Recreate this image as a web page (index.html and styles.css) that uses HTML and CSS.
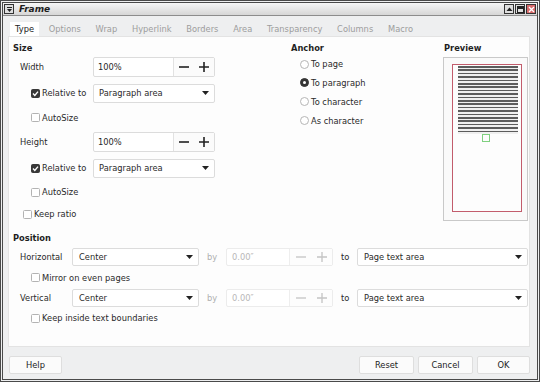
FILE: index.html
```html
<!DOCTYPE html>
<html>
<head>
<meta charset="utf-8">
<title>Frame</title>
<link rel="stylesheet" href="styles.css">
</head>
<body>
<div class="window">
  <div class="titlebar">
    <span class="wbtn menu"><svg width="7" height="7" viewBox="0 0 7 7"><rect x="1" y="1" width="5" height="1" fill="#222"/><polygon points="1,3 6,3 3.5,6" fill="#222"/></svg></span>
    <span class="title">Frame</span>
    <span class="wbtns">
      <span class="wbtn"><svg width="7" height="7" viewBox="0 0 7 7"><polygon points="0.5,5 6.5,5 3.5,1.5" fill="#222"/></svg></span>
      <span class="wbtn"><svg width="7" height="7" viewBox="0 0 7 7"><rect x="0.5" y="0.5" width="6" height="6" fill="none" stroke="#222"/><rect x="0.5" y="0.5" width="6" height="2.5" fill="#222"/></svg></span>
      <span class="wbtn close"><svg width="7" height="7" viewBox="0 0 7 7"><path d="M1 1 L6 6 M6 1 L1 6" stroke="#fff" stroke-width="1.3"/></svg></span>
    </span>
  </div>
  <div class="main">
    <div class="tabs">
      <span class="tab active">Type</span>
      <span class="tab">Options</span>
      <span class="tab">Wrap</span>
      <span class="tab">Hyperlink</span>
      <span class="tab">Borders</span>
      <span class="tab">Area</span>
      <span class="tab">Transparency</span>
      <span class="tab">Columns</span>
      <span class="tab">Macro</span>
    </div>
    <div class="panel">
      <div class="top">
        <div class="col-size">
          <div class="heading">Size</div>
          <div class="row r26 ind7">
            <span class="lbl w73">Width</span>
            <div class="spin">
              <span class="spin-input">100%</span>
              <span class="spin-btns">
                <span class="sb"><svg width="10" height="10" viewBox="0 0 10 10"><path d="M0 5 H10" stroke="#222" stroke-width="1.6"/></svg></span>
                <span class="sb"><svg width="10" height="10" viewBox="0 0 10 10"><path d="M0 5 H10 M5 0 V10" stroke="#222" stroke-width="1.6"/></svg></span>
              </span>
            </div>
          </div>
          <div class="row r26 ind18">
            <span class="cbw w62"><span class="cb checked"><svg width="7" height="7" viewBox="0 0 7 7"><path d="M1 3.6 L2.8 5.4 L6 1.6" stroke="#fff" stroke-width="1.4" fill="none"/></svg></span>Relative to</span>
            <div class="dropdown"><span>Paragraph area</span><svg width="7" height="4" viewBox="0 0 7 4"><polygon points="0,0 7,0 3.5,4" fill="#222"/></svg></div>
          </div>
          <div class="row r23 ind18"><span class="cbw"><span class="cb"></span>AutoSize</span></div>
          <div class="row r26 ind7">
            <span class="lbl w73">Height</span>
            <div class="spin">
              <span class="spin-input">100%</span>
              <span class="spin-btns">
                <span class="sb"><svg width="10" height="10" viewBox="0 0 10 10"><path d="M0 5 H10" stroke="#222" stroke-width="1.6"/></svg></span>
                <span class="sb"><svg width="10" height="10" viewBox="0 0 10 10"><path d="M0 5 H10 M5 0 V10" stroke="#222" stroke-width="1.6"/></svg></span>
              </span>
            </div>
          </div>
          <div class="row r26 ind18">
            <span class="cbw w62"><span class="cb checked"><svg width="7" height="7" viewBox="0 0 7 7"><path d="M1 3.6 L2.8 5.4 L6 1.6" stroke="#fff" stroke-width="1.4" fill="none"/></svg></span>Relative to</span>
            <div class="dropdown"><span>Paragraph area</span><svg width="7" height="4" viewBox="0 0 7 4"><polygon points="0,0 7,0 3.5,4" fill="#222"/></svg></div>
          </div>
          <div class="row r22 ind18"><span class="cbw"><span class="cb"></span>AutoSize</span></div>
          <div class="row r22 ind10"><span class="cbw"><span class="cb"></span>Keep ratio</span></div>
        </div>
        <div class="col-anchor">
          <div class="heading">Anchor</div>
          <div class="radios">
            <div class="row r18 ind9"><span class="radio"></span>To page</div>
            <div class="row r19 ind9"><span class="radio checked"></span>To paragraph</div>
            <div class="row r19 ind9"><span class="radio"></span>To character</div>
            <div class="row r19 ind9"><span class="radio"></span>As character</div>
          </div>
        </div>
        <div class="col-preview">
          <div class="heading ind1">Preview</div>
          <div class="preview">
            <div class="page">
              <div class="lines"></div>
              <div class="frame-box"></div>
            </div>
          </div>
        </div>
      </div>
      <div class="position">
        <div class="heading h17">Position</div>
        <div class="row r20 ind7">
          <span class="lbl w52">Horizontal</span>
          <div class="dropdown pos"><span>Center</span><svg width="7" height="4" viewBox="0 0 7 4"><polygon points="0,0 7,0 3.5,4" fill="#222"/></svg></div>
          <span class="by">by</span>
          <div class="spin disabled">
            <span class="spin-input">0.00″</span>
            <span class="spin-btns">
              <span class="sb"><svg width="10" height="10" viewBox="0 0 10 10"><path d="M0 5 H10" stroke="#c4c4c4" stroke-width="1.3"/></svg></span>
              <span class="sb"><svg width="10" height="10" viewBox="0 0 10 10"><path d="M0 5 H10 M5 0 V10" stroke="#c4c4c4" stroke-width="1.3"/></svg></span>
            </span>
          </div>
          <span class="to">to</span>
          <div class="dropdown wide"><span>Page text area</span><svg width="7" height="4" viewBox="0 0 7 4"><polygon points="0,0 7,0 3.5,4" fill="#222"/></svg></div>
        </div>
        <div class="row r21 ind18"><span class="cbw"><span class="cb"></span>Mirror on even pages</span></div>
        <div class="row r20 ind7">
          <span class="lbl w52">Vertical</span>
          <div class="dropdown pos"><span>Center</span><svg width="7" height="4" viewBox="0 0 7 4"><polygon points="0,0 7,0 3.5,4" fill="#222"/></svg></div>
          <span class="by">by</span>
          <div class="spin disabled">
            <span class="spin-input">0.00″</span>
            <span class="spin-btns">
              <span class="sb"><svg width="10" height="10" viewBox="0 0 10 10"><path d="M0 5 H10" stroke="#c4c4c4" stroke-width="1.3"/></svg></span>
              <span class="sb"><svg width="10" height="10" viewBox="0 0 10 10"><path d="M0 5 H10 M5 0 V10" stroke="#c4c4c4" stroke-width="1.3"/></svg></span>
            </span>
          </div>
          <span class="to">to</span>
          <div class="dropdown wide"><span>Page text area</span><svg width="7" height="4" viewBox="0 0 7 4"><polygon points="0,0 7,0 3.5,4" fill="#222"/></svg></div>
        </div>
        <div class="row r20 ind18"><span class="cbw"><span class="cb"></span>Keep inside text boundaries</span></div>
      </div>
    </div>
    <div class="buttons">
      <span class="btn help">Help</span>
      <span class="spacer"></span>
      <span class="btn reset">Reset</span>
      <span class="btn cancel">Cancel</span>
      <span class="btn ok">OK</span>
    </div>
  </div>
</div>
</body>
</html>
```

FILE: styles.css
```css
* { box-sizing: border-box; }
html, body { margin: 0; padding: 0; }
body {
  width: 540px;
  height: 382px;
  overflow: hidden;
  font-family: "DejaVu Sans", sans-serif;
  font-size: 8.3px;
  color: #2a2a2a;
  background: #fff;
}
.window {
  width: 540px;
  height: 382px;
  border: 3px double #4a4a4a;
  display: flex;
  flex-direction: column;
  background: #eeeff0;
}
.titlebar {
  height: 13px;
  display: flex;
  align-items: center;
  background: linear-gradient(#f6f6f6, #d6d6d6);
  border-bottom: 1px solid #8c8c8c;
  padding: 0 1px 0 1px;
}
.title {
  font-weight: bold;
  font-style: italic;
  font-size: 9px;
  color: #1e1e1e;
  margin-left: 5px;
}
.wbtns { margin-left: auto; display: flex; gap: 1px; }
.wbtn {
  width: 10px;
  height: 10px;
  border: 1px solid #333;
  background: #dedede;
  display: flex;
  align-items: center;
  justify-content: center;
}
.wbtn.close { background: #d86a6a; }
.main {
  flex: 1;
  display: flex;
  flex-direction: column;
  padding: 0 7px 0 5px;
}
.tabs {
  height: 20px;
  display: flex;
  align-items: flex-end;
  padding-left: 2px;
}
.tab {
  height: 14px;
  line-height: 14px;
  padding: 0 5px;
  margin-right: 4.75px;
  color: #9d9d9d;
}
.tab.active { background: #fff; color: #222; }
.panel {
  flex: 1;
  background: #fdfdfd;
  border: 1px solid #e3e3e3;
  padding: 5px 1px 0 4px;
}
.top { display: flex; }
.col-size { width: 278px; display: flex; flex-direction: column; }
.col-anchor { width: 152px; display: flex; flex-direction: column; }
.col-preview { width: 85px; display: flex; flex-direction: column; }
.heading { height: 12px; line-height: 12px; font-weight: bold; color: #1f1f1f; }
.heading.h17 { height: 17px; line-height: 17px; margin-top: 5px; }
.row { display: flex; align-items: center; }
.r18 { height: 18px; }
.r19 { height: 19px; }
.r20 { height: 20px; }
.r21 { height: 21px; }
.r22 { height: 22px; }
.r23 { height: 23px; }
.r26 { height: 26px; }
.ind1 { padding-left: 1px; }
.ind7 { padding-left: 7px; }
.ind9 { padding-left: 9px; }
.ind10 { padding-left: 10px; }
.ind18 { padding-left: 18px; }
.lbl { flex: none; }
.w73 { width: 73px; }
.w52 { width: 52px; }
.w62 { width: 62px; }
.cbw { display: flex; align-items: center; flex: none; }
.cb {
  width: 9px;
  height: 9px;
  border: 1px solid #b3b3b3;
  border-radius: 1.5px;
  background: #fff;
  margin-right: 2px;
  display: flex;
  align-items: center;
  justify-content: center;
}
.cb.checked { background: #383838; border-color: #383838; }
.radios { margin-top: 1px; }
.radio {
  width: 9px;
  height: 9px;
  border: 1px solid #b5b5b5;
  border-radius: 50%;
  background: #fff;
  margin-right: 2px;
  flex: none;
  display: flex;
  align-items: center;
  justify-content: center;
}
.radio.checked { background: #353535; border-color: #353535; }
.radio.checked::after {
  content: "";
  width: 3px;
  height: 3px;
  border-radius: 50%;
  background: #fff;
}
.spin {
  width: 122px;
  height: 20px;
  display: flex;
  border: 1px solid #dcdcdc;
  border-radius: 2px;
  background: #fff;
  flex: none;
}
.spin-input {
  width: 80px;
  padding-left: 4px;
  border-right: 1px solid #e2e2e2;
  display: flex;
  align-items: center;
}
.spin-btns { flex: 1; display: flex; align-items: center; background: #fbfbfb; }
.sb { width: 20px; display: flex; justify-content: center; }
.spin.disabled { width: 107px; height: 18px; border-color: #ececec; }
.spin.disabled .spin-input { width: 64px; color: #b8b8b8; border-right-color: #eeeeee; padding-left: 5px; }
.spin.disabled .spin-btns { background: #fdfdfd; }
.spin.disabled .sb { width: 21px; }
.dropdown {
  width: 122px;
  height: 19px;
  display: flex;
  align-items: center;
  justify-content: space-between;
  border: 1px solid #dcdcdc;
  border-radius: 2px;
  background: #fff;
  padding: 0 5px 0 5px;
  flex: none;
}
.dropdown.pos { width: 127px; height: 18px; padding-left: 6px; }
.dropdown.wide { width: 171px; height: 18px; padding-left: 6px; }
.by { margin-left: 8px; width: 19px; color: #b0b0b0; flex: none; }
.to { margin-left: 8px; width: 16px; flex: none; }
.preview {
  margin-top: 3px;
  width: 85px;
  height: 164px;
  border: 1px solid #c9c9c9;
  background: #fafafa;
  padding: 6px 0 0 8px;
}
.page {
  width: 70px;
  height: 148px;
  border: 1px solid #c25c6c;
  background: #fdfdfd;
  padding: 1px 0 0 5px;
}
.lines {
  width: 60px;
  height: 68px;
  background: repeating-linear-gradient(#5c5c5c 0 1.6px, #f0f0f0 1.6px 3.4px);
}
.frame-box {
  width: 8px;
  height: 8px;
  margin-left: 24px;
  border: 1px solid #7fd07f;
}
.buttons {
  height: 32px;
  display: flex;
  padding: 9px 0 5px 1px;
  gap: 4px;
}
.spacer { flex: 1; }
.btn {
  height: 18px;
  display: flex;
  align-items: center;
  justify-content: center;
  background: #fbfbfb;
  border: 1px solid #dedede;
  border-radius: 2px;
  color: #222;
}
.help { width: 53px; }
.reset { width: 55px; }
.cancel { width: 55px; }
.ok { width: 53px; }
```
